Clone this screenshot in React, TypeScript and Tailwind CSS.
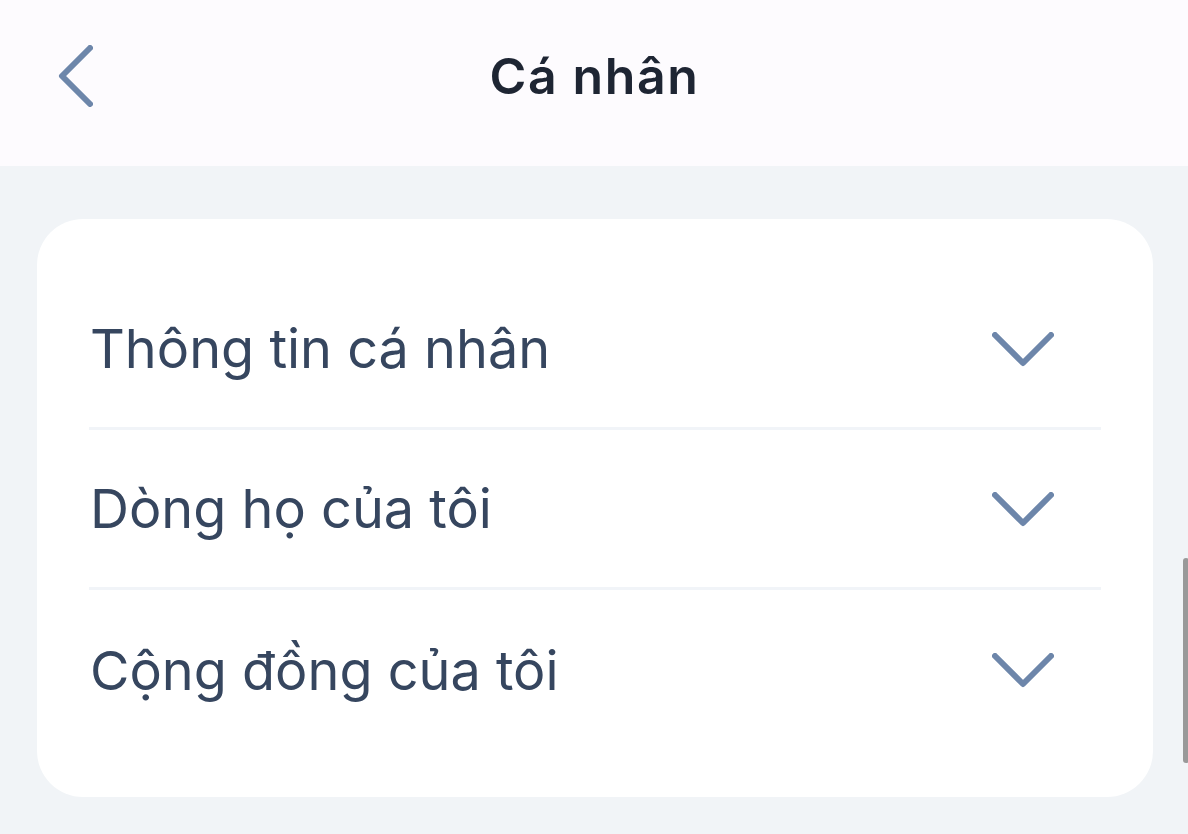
import React from "react";

function ChevronDown() {
  return (
    <svg width="62" height="36" viewBox="0 0 62 36" fill="none">
      <polyline
        points="3,3 31,31 59,3"
        stroke="#6d86aa"
        strokeWidth="6"
        strokeLinecap="round"
        strokeLinejoin="round"
      />
    </svg>
  );
}

function ChevronLeft() {
  return (
    <svg width="35" height="62" viewBox="0 0 35 62" fill="none">
      <polyline
        points="32,3 4,31 32,59"
        stroke="#6d86aa"
        strokeWidth="6"
        strokeLinecap="round"
        strokeLinejoin="round"
      />
    </svg>
  );
}

const items = ["Thông tin cá nhân", "Dòng họ của tôi", "Cộng đồng của tôi"];

export default function App() {
  return (
    <div
      className="relative w-[1188px] h-[834px] overflow-hidden bg-[#f1f4f7]"
      style={{ fontFamily: "Inter, 'Noto Sans', sans-serif" }}
    >
      <header className="h-[166px] bg-[#fdfbfe]">
        <div className="relative h-[152px] flex items-center justify-center">
          <div className="absolute left-[58px] top-[45px]">
            <ChevronLeft />
          </div>
          <h1 className="text-[50px] font-semibold text-[#1e2533] tracking-[1.6px] pl-[1px]">Cá nhân</h1>
        </div>
      </header>
      <main className="pt-[53px] pl-[37px]">
        <div className="w-[1116px] h-[578px] rounded-[46px] bg-white px-[52px] pt-[51px]">
          {items.map((t, i) => (
            <div
              key={t}
              className={
                "h-[160px] flex items-center justify-between " +
                (i < items.length - 1 ? "border-b-[3px] border-[#f1f4f8]" : "")
              }
            >
              <span className="text-[54px] text-[#36465f] pl-[1px]">{t}</span>
              <div className="mr-[47px] mt-[2px]">
                <ChevronDown />
              </div>
            </div>
          ))}
        </div>
      </main>
      <div className="absolute left-[1183px] top-[558px] w-[6px] h-[205px] rounded-[3px] bg-[#999999]" />
    </div>
  );
}
